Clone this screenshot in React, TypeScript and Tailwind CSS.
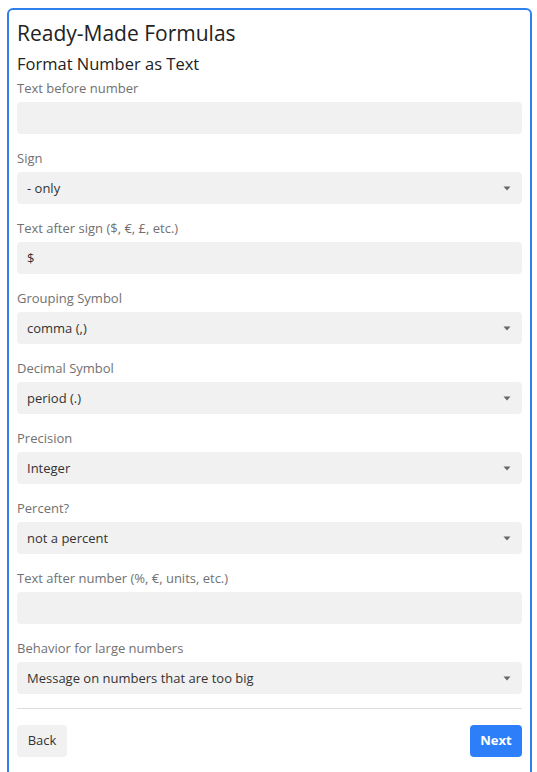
import React from 'react';

type Field = {
  label: string;
  kind: 'text' | 'select';
  value: string;
};

const fields: Field[] = [
  { label: 'Text before number', kind: 'text', value: '' },
  { label: 'Sign', kind: 'select', value: '- only' },
  { label: 'Text after sign ($, €, £, etc.)', kind: 'text', value: '$' },
  { label: 'Grouping Symbol', kind: 'select', value: 'comma (,)' },
  { label: 'Decimal Symbol', kind: 'select', value: 'period (.)' },
  { label: 'Precision', kind: 'select', value: 'Integer' },
  { label: 'Percent?', kind: 'select', value: 'not a percent' },
  { label: 'Text after number (%, €, units, etc.)', kind: 'text', value: '' },
  { label: 'Behavior for large numbers', kind: 'select', value: 'Message on numbers that are too big' },
];

const Caret = () => (
  <svg width="8" height="5" viewBox="0 0 8 5" className="shrink-0">
    <path d="M0.5 0.5 L7.5 0.5 L4 4.5 Z" fill="#666666" />
  </svg>
);

const FormField: React.FC<{ field: Field }> = ({ field }) => (
  <div className="mb-[14px]">
    <div className="h-5 leading-5 text-[13px] font-medium text-[#717171]">{field.label}</div>
    <div className="mt-1 h-8 rounded bg-[#f1f1f1] flex items-center justify-between pl-[10px] pr-[11px] text-[13px] text-[#333333]">
      <span className="pt-[1px]">{field.value}</span>
      {field.kind === 'select' && <Caret />}
    </div>
  </div>
);

export default function App() {
  return (
    <div className="w-[537px] h-[772px] overflow-hidden bg-white pt-2 pl-[7px] pr-[5px]" style={{ fontFamily: '"Open Sans", "Noto Sans", sans-serif' }}>
      <div className="border-2 border-[#2f80ed] rounded-md px-2 pt-[9px] pb-6 h-[800px]">
        <h1 className="text-[21px] leading-7 text-[#222222]">Ready-Made Formulas</h1>
        <h2 className="mt-[5px] text-[16.5px] leading-6 font-medium text-[#222222]">Format Number as Text</h2>
        <div className="mt-[2px]">
          {fields.map((f, i) => (
            <FormField key={i} field={f} />
          ))}
        </div>
        <div className="border-t border-[#dddddd] mt-1 pt-4 flex justify-between">
          <button className="h-8 w-[50px] rounded bg-[#f1f1f1] text-[13px] text-[#333333]">Back</button>
          <button className="h-8 w-[52px] rounded bg-[#2d7ff9] text-[13px] font-bold text-white">Next</button>
        </div>
      </div>
    </div>
  );
}
